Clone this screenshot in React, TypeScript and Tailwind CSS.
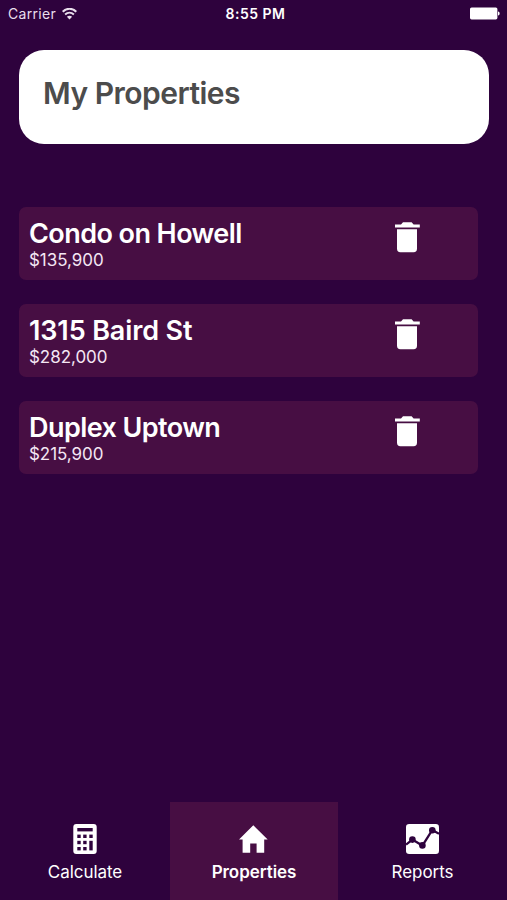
import type { ReactNode } from 'react'

type Property = {
  id: number
  name: string
  price: string
  tracking: string
}

const properties: Property[] = [
  { id: 1, name: 'Condo on Howell', price: '$135,900', tracking: 'tracking-[-0.57px]' },
  { id: 2, name: '1315 Baird St', price: '$282,000', tracking: 'tracking-[-0.12px]' },
  { id: 3, name: 'Duplex Uptown', price: '$215,900', tracking: 'tracking-[-0.57px]' },
]

function WifiIcon() {
  return (
    <svg width="15" height="12" viewBox="0 0 15 12" fill="none">
      <path d="M0.7 3.7C4.6 -0.2 10.4 -0.2 14.3 3.7" stroke="currentColor" strokeWidth="2" />
      <path d="M3.1 6.5C5.7 4.1 9.3 4.1 11.9 6.5" stroke="currentColor" strokeWidth="1.9" />
      <path d="M7.5 11.4L4.9 8.7C6.4 7.4 8.6 7.4 10.1 8.7Z" fill="currentColor" />
    </svg>
  )
}

function BatteryIcon() {
  return (
    <svg width="30" height="13" viewBox="0 0 30 13" fill="currentColor">
      <rect x="0" y="0.4" width="27.4" height="12" rx="1.6" />
      <path d="M28 4.4C30.2 4.9 30.2 7.9 28 8.4Z" />
    </svg>
  )
}

function TrashIcon() {
  return (
    <svg width="26" height="31" viewBox="0 0 26 31" fill="currentColor">
      <path d="M0 2.4H6L8 0.2H16.6L18.6 2.4H24.8V5.4H0Z" />
      <path d="M2 7.2H22V26.8Q22 30.2 18.6 30.2H5.4Q2 30.2 2 26.8Z" />
    </svg>
  )
}

function CalculatorIcon() {
  return (
    <svg width="24" height="30" viewBox="0 0 24 30">
      <rect x="0.3" y="0" width="23.4" height="30" rx="3" fill="currentColor" />
      <g className="fill-[#2e023d]">
        <rect x="4.3" y="4" width="15.4" height="3.4" />
        <rect x="4.3" y="10.6" width="3.4" height="3.4" />
        <rect x="10.2" y="10.6" width="3.4" height="3.4" />
        <rect x="16.3" y="10.6" width="3.4" height="3.4" />
        <rect x="4.3" y="16.8" width="3.4" height="3.4" />
        <rect x="10.2" y="16.8" width="3.4" height="3.4" />
        <rect x="4.3" y="23" width="3.4" height="3.4" />
        <rect x="10.2" y="23" width="3.4" height="3.4" />
        <rect x="16.3" y="16.8" width="3.4" height="9.6" />
      </g>
    </svg>
  )
}

function HomeIcon() {
  return (
    <svg width="30" height="30" viewBox="0 0 30 30" fill="currentColor">
      <path d="M14.3 1.3L28.7 15.4H25.2V28.8H17.6V19.5H11.2V28.8H3.6V15.4H0Z" />
    </svg>
  )
}

function ReportsIcon() {
  return (
    <svg width="33" height="30" viewBox="0 0 33 30">
      <rect width="33" height="30" rx="3.2" fill="currentColor" />
      <g className="fill-[#2e023d] stroke-[#2e023d]">
        <path d="M0 20.6L6.4 15.6L16.4 21.6L26.3 6L33 9.7" fill="none" strokeWidth="2.3" />
        <circle cx="6.4" cy="15.6" r="3.3" stroke="none" />
        <circle cx="16.4" cy="21.4" r="3.3" stroke="none" />
        <circle cx="26.3" cy="6.2" r="3.3" stroke="none" />
      </g>
    </svg>
  )
}

function StatusBar() {
  return (
    <div className="grid h-[27px] grid-cols-3 items-center pl-2 pr-[7px] text-[14px]">
      <div className="flex items-center gap-[6px] text-[#e9dfec]">
        <span className="tracking-[0.3px]">Carrier</span>
        <WifiIcon />
      </div>
      <span className="pl-[3px] text-center font-semibold tracking-[0.5px]">8:55 PM</span>
      <div className="flex justify-end">
        <BatteryIcon />
      </div>
    </div>
  )
}

function PropertyRow({ property }: { property: Property }) {
  return (
    <li className="flex h-[73px] items-start justify-between rounded-[7px] bg-[#470e43] pl-[10px] pr-[57px]">
      <div className="pt-[11px]">
        <h2 className={`text-[27px] font-semibold leading-8 ${property.tracking}`}>{property.name}</h2>
        <p className="text-[17px] leading-5 tracking-[-0.05px] text-[#f4e6f4]">{property.price}</p>
      </div>
      <button type="button" aria-label="Delete" className="pt-[15px]">
        <TrashIcon />
      </button>
    </li>
  )
}

function Tab({ label, icon, active }: { label: string; icon: ReactNode; active?: boolean }) {
  return (
    <button
      type="button"
      className={
        active
          ? 'flex flex-col items-center bg-[#470e43] pt-[22px] font-semibold'
          : 'flex flex-col items-center pt-[22px] text-white'
      }
    >
      {icon}
      <span className="mt-[8px] text-[17px] leading-5 tracking-[-0.05px]">{label}</span>
    </button>
  )
}

export default function App() {
  return (
    <div className="flex h-[900px] w-[507px] flex-col bg-[#2e023d] font-['Inter','Liberation_Sans',sans-serif] text-white">
      <StatusBar />

      <header className="ml-[19px] mr-[18px] mt-[23px] h-[94px] rounded-[25px] bg-white pl-6 pt-[24px]">
        <h1 className="text-[30px] font-semibold leading-[38px] tracking-[-0.5px] text-[#4c4c4c]">My Properties</h1>
      </header>

      <ul className="ml-[19px] mr-[29px] mt-[63px] flex flex-1 flex-col gap-6">
        {properties.map((property) => (
          <PropertyRow key={property.id} property={property} />
        ))}
      </ul>

      <nav className="grid h-[98px] grid-cols-[170px_168px_169px]">
        <Tab label="Calculate" icon={<CalculatorIcon />} />
        <Tab label="Properties" icon={<HomeIcon />} active />
        <Tab label="Reports" icon={<ReportsIcon />} />
      </nav>
    </div>
  )
}
